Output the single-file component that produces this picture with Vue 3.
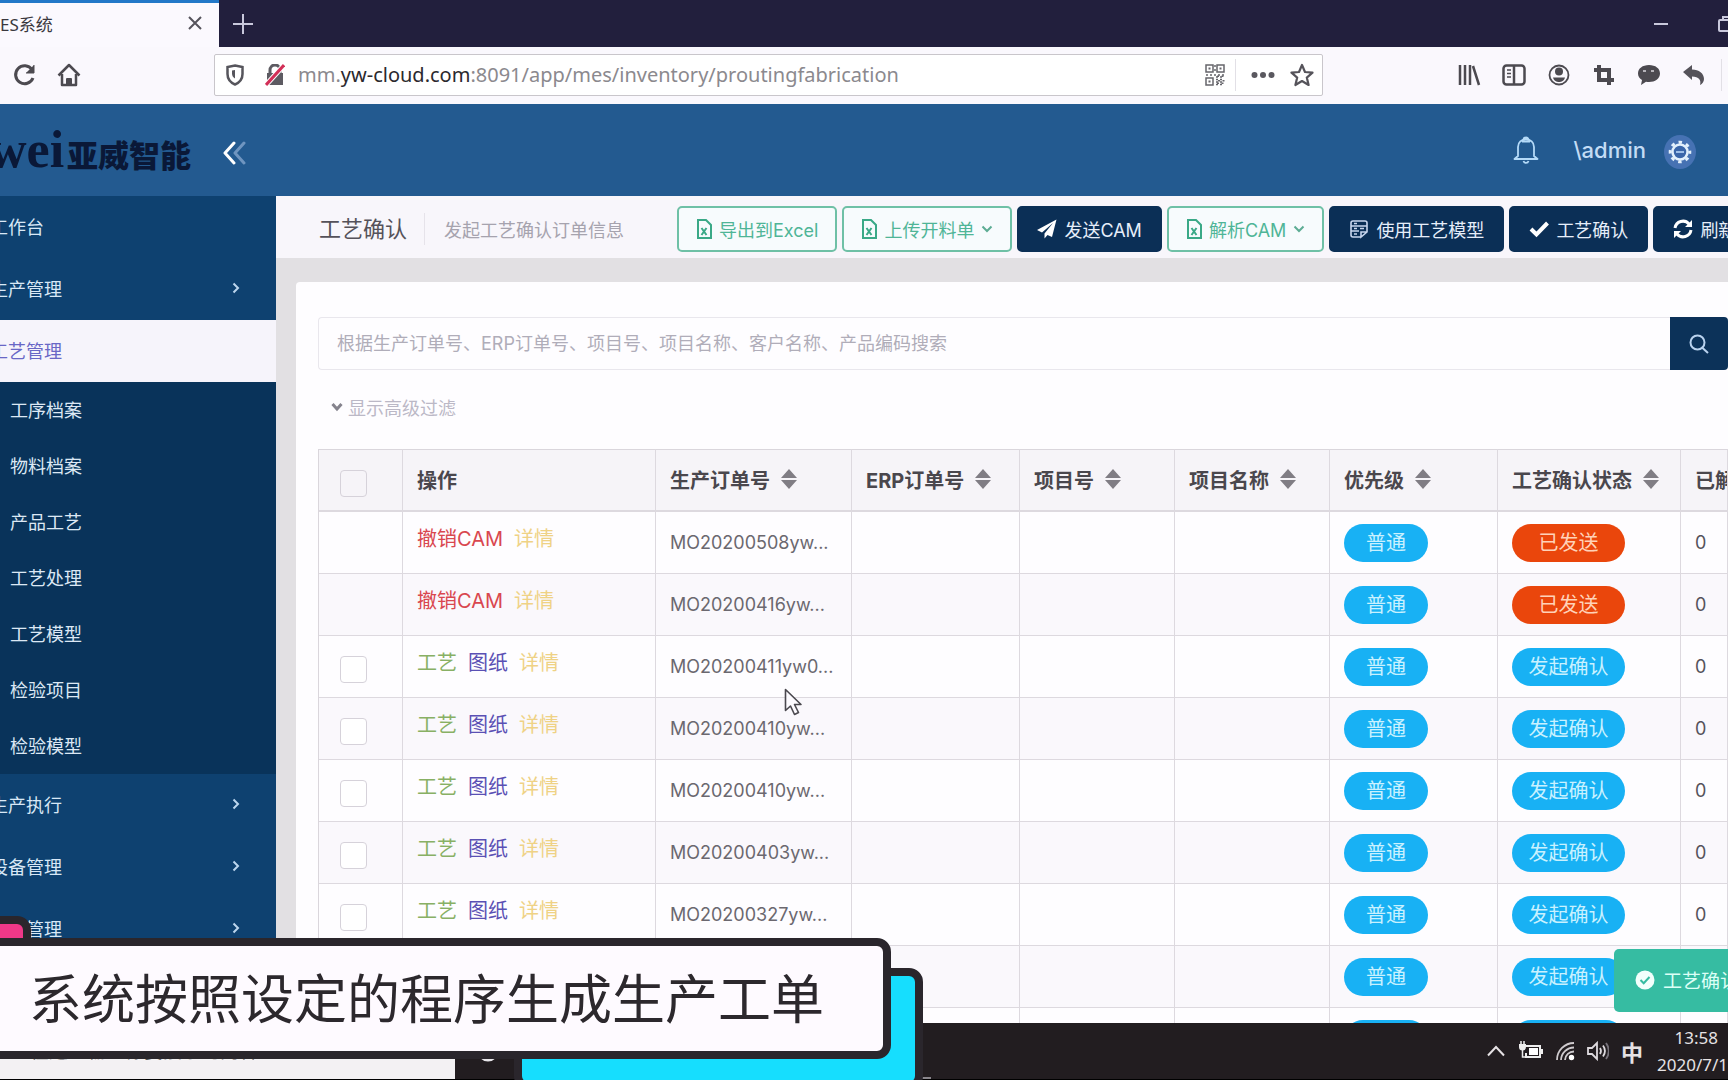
<script setup>
import { ref } from 'vue'

const keyword = ref('')

const subMenu = ['工序档案', '物料档案', '产品工艺', '工艺处理', '工艺模型', '检验项目', '检验模型']

const columns = [
  { label: '生产订单号', sort: true },
  { label: 'ERP订单号', sort: true },
  { label: '项目号', sort: true },
  { label: '项目名称', sort: true },
  { label: '优先级', sort: true },
  { label: '工艺确认状态', sort: true },
  { label: '已解', sort: false }
]

const sentOps = [
  { text: '撤销CAM', tone: 'red' },
  { text: '详情', tone: 'yellow' }
]
const openOps = [
  { text: '工艺', tone: 'green' },
  { text: '图纸', tone: 'indigo' },
  { text: '详情', tone: 'yellow' }
]

const rows = [
  { order: 'MO20200508yw...', sent: true },
  { order: 'MO20200416yw...', sent: true },
  { order: 'MO20200411yw0...', sent: false },
  { order: 'MO20200410yw...', sent: false },
  { order: 'MO20200410yw...', sent: false },
  { order: 'MO20200403yw...', sent: false },
  { order: 'MO20200327yw...', sent: false },
  { order: '', sent: false },
  { order: '', sent: false }
]
</script>

<template>
  <div class="screen">
    <header class="tabs">
      <div class="tab">
        <span>ES系统</span>
        <button class="bare" aria-label="关闭标签页">
          <svg width="16" height="16" viewBox="0 0 16 16" fill="none" stroke="#55535c" stroke-width="2"><path d="M2 2l12 12M14 2L2 14" /></svg>
        </button>
      </div>
      <button class="bare plus" aria-label="新建标签页">
        <svg width="20" height="20" viewBox="0 0 20 20" fill="none" stroke="#c9c8dc" stroke-width="2"><path d="M10 0v20M0 10h20" /></svg>
      </button>
      <div class="wincontrols">
        <button class="bare" aria-label="最小化">
          <svg width="16" height="16" viewBox="0 0 16 16" stroke="#c9c8dc" stroke-width="2"><path d="M1 8h14" /></svg>
        </button>
        <button class="bare" aria-label="还原">
          <svg width="18" height="18" viewBox="0 0 18 18" fill="none" stroke="#c9c8dc" stroke-width="2"><rect x="2" y="5" width="11" height="11" rx="1" /><path d="M6 5V2h11v11h-4" /></svg>
        </button>
      </div>
    </header>

    <nav class="toolbar">
      <div class="navbtns">
        <button class="bare" aria-label="刷新">
          <svg width="24" height="24" viewBox="0 0 24 24" fill="none" stroke="#4c4a50" stroke-width="3"><path d="M19 6.500A9 9 0 1 0 20 15" /><path d="M21 2v8h-8" fill="#4c4a50" stroke-width="1" /></svg>
        </button>
        <button class="bare" aria-label="主页">
          <svg width="24" height="24" viewBox="0 0 24 24" fill="none" stroke="#4c4a50" stroke-width="2.500" stroke-linejoin="round"><path d="M1.500 12.500L12 2l10.500 10.500M5 11v11h14V11" /><path d="M10 22v-6h4v6z" fill="#4c4a50" stroke-width="2" /></svg>
        </button>
      </div>
      <div class="urlbox">
        <svg width="18" height="22" viewBox="0 0 18 22" fill="none" stroke="#56555c" stroke-width="2.500"><path d="M9 1.500L16.500 3v7c0 5-3 8.500-7.500 10.500C4.500 18.500 1.500 15 1.500 10V3z" /><path d="M9 6v8.500c-2-1-3-3-3-5V6.500z" fill="#56555c" stroke="none" /></svg>
        <svg width="20" height="22" viewBox="0 0 20 22" fill="none"><rect x="2" y="9" width="16" height="12" fill="#5d5b62" /><path d="M5 10V6a5 5 0 0 1 10 0v4" stroke="#5d5b62" stroke-width="3" /><path d="M1 21L19 1" stroke="#fff" stroke-width="5" /><path d="M1 21L19 1" stroke="#d22f57" stroke-width="3" /></svg>
        <span class="url">mm.<b>yw-cloud.com</b>:8091/app/mes/inventory/proutingfabrication</span>
        <svg width="20" height="22" viewBox="0 0 20 22" fill="none" stroke="#66656b" stroke-width="1.500"><rect x="1" y="1" width="7" height="7" /><rect x="12" y="1" width="7" height="7" /><rect x="1" y="14" width="7" height="7" /><path d="M3.500 4.500h2M14.500 4.500h2M3.500 17.500h2" stroke-width="2" /><path d="M10 1v8M1 11h18M11 13h8M11 15.500h8M11 18h8M11 20.500h8" stroke-dasharray="2 2" /><path d="M12 12.200h8M13 16.700h7M12 19.200h7" stroke-dasharray="2 2.500" /></svg>
        <i class="sep"></i>
        <svg width="24" height="8" viewBox="0 0 24 8" fill="#5a585f"><circle cx="3.500" cy="4" r="3" /><circle cx="12" cy="4" r="3" /><circle cx="20.500" cy="4" r="3" /></svg>
        <svg width="24" height="24" viewBox="0 0 24 24" fill="none" stroke="#55535a" stroke-width="2.200" stroke-linejoin="round"><path d="M12 2l3 7 7.500.6-5.700 5 1.800 7.400L12 18l-6.600 4 1.800-7.400-5.700-5L9 9z" /></svg>
      </div>
      <div class="tools">
        <svg width="24" height="24" viewBox="0 0 24 24" stroke="#4c4a50" stroke-width="2.500"><path d="M3 2v20M8 2v20M13 2v20M16 3l6 19" /></svg>
        <svg width="24" height="24" viewBox="0 0 24 24" fill="none" stroke="#4c4a50" stroke-width="2.500"><rect x="1.500" y="2.500" width="21" height="19" rx="3" /><path d="M12 3v18" /><path d="M5 7h4M5 10.500h4M5 14h4" stroke-width="1.500" /></svg>
        <svg width="24" height="24" viewBox="0 0 24 24"><circle cx="12" cy="12" r="9.500" fill="none" stroke="#4c4a50" stroke-width="1.800" /><circle cx="12" cy="8.500" r="4" fill="#4c4a50" /><path d="M6 14.500h12c-1 3.500-3.500 4.500-6 4.500s-5-1-6-4.500z" fill="#4c4a50" /></svg>
        <svg width="24" height="24" viewBox="0 0 24 24" fill="none" stroke="#4c4a50" stroke-width="4"><path d="M7 2v15h15M2 7h15v15" /></svg>
        <svg width="24" height="24" viewBox="0 0 24 24"><path d="M12 2c6.500 0 11 3.500 11 8.500S18 19 12 19c-1 0-2 0-3-.3L4 22l1-5c-2.500-1.500-4-3.800-4-6.500C1 5.500 5.500 2 12 2z" fill="#4c4a50" /><path d="M6 8h3M14 8h3" stroke="#d8d6dc" stroke-width="1.500" /></svg>
        <svg width="24" height="24" viewBox="0 0 24 24"><path d="M1 9l9-7v4.500c7 0 12 4 12 9.500 0 2.500-1.500 5-4 6 1.500-5-1-8-8-8.500V17z" fill="#55535a" /></svg>
        <i class="sep"></i>
      </div>
    </nav>

    <div class="appbar">
      <div class="brand"><span class="mark">wei</span><span class="name">亚威智能</span></div>
      <button class="bare collapse" aria-label="收起菜单">
        <svg width="24" height="24" viewBox="0 0 24 24" fill="none" stroke-width="3" stroke-linecap="round" stroke-linejoin="round"><path d="M12 2L3 12l9 10" stroke="#fff" /><path d="M22 2l-9 10 9 10" stroke="#6f95c0" /></svg>
      </button>
      <div class="user">
        <svg width="26" height="28" viewBox="0 0 26 28" fill="none" stroke="#b4daf8" stroke-width="1.800" stroke-linejoin="round"><path d="M10.500 4a2.500 2.500 0 0 1 5 0M5 20V11c0-5 3.500-7.500 8-7.500s8 2.500 8 7.500v9l3.500 3H1.500z" /><path d="M10.500 25a2.600 2.600 0 0 0 5 0M9 5.500h8" /></svg>
        <span class="who">\admin</span>
        <svg class="gear" width="32" height="34" viewBox="0 0 32 34"><ellipse cx="16" cy="17" rx="16" ry="17" fill="#4672b3" /><circle cx="16" cy="17" r="7.500" fill="#3a66aa" stroke="#e2f0fc" stroke-width="2.500" /><circle cx="16" cy="17" r="9.800" fill="none" stroke="#e2f0fc" stroke-width="3" stroke-dasharray="3.500 4.197" stroke-dashoffset="1.750" /><path d="M12 17h8" stroke="#9dbfe8" stroke-width="2" /></svg>
      </div>
    </div>

    <div class="body">
      <aside class="side">
        <a href="#" class="item">工作台</a>
        <a href="#" class="item">生产管理<svg class="arrow" width="8" height="12" viewBox="0 0 8 12"><path d="M1.500 1.500L6 6l-4.500 4.500" /></svg></a>
        <a href="#" class="item active">工艺管理</a>
        <div class="sub">
          <a v-for="s in subMenu" :key="s" href="#">{{ s }}</a>
        </div>
        <a href="#" class="item">生产执行<svg class="arrow" width="8" height="12" viewBox="0 0 8 12"><path d="M1.500 1.500L6 6l-4.500 4.500" /></svg></a>
        <a href="#" class="item">设备管理<svg class="arrow" width="8" height="12" viewBox="0 0 8 12"><path d="M1.500 1.500L6 6l-4.500 4.500" /></svg></a>
        <a href="#" class="item tail">管理<svg class="arrow" width="8" height="12" viewBox="0 0 8 12"><path d="M1.500 1.500L6 6l-4.500 4.500" /></svg></a>
      </aside>

      <main class="main">
        <div class="pagehead">
          <h1>工艺确认</h1>
          <p>发起工艺确认订单信息</p>
          <div class="actions">
            <button class="btn line">
              <svg width="16" height="20" viewBox="0 0 16 20" class="file"><path d="M2 1h8l5 5v13H2z" /><path d="M5.500 9l5 7M10.500 9l-5 7" /></svg>导出到Excel
            </button>
            <button class="btn line">
              <svg width="16" height="20" viewBox="0 0 16 20" class="file"><path d="M2 1h8l5 5v13H2z" /><path d="M5.500 9l5 7M10.500 9l-5 7" /></svg>上传开料单
              <svg width="12" height="8" viewBox="0 0 12 8" class="caret"><path d="M1.500 1.500L6 6l4.500-4.500" /></svg>
            </button>
            <button class="btn solid">
              <svg width="20" height="20" viewBox="0 0 20 20" fill="#fff"><path d="M19.500.5L0 11l5 2.500L16 4 7.500 14.500V19.500L10.500 16l4.500 2z" /></svg>发送CAM
            </button>
            <button class="btn line">
              <svg width="16" height="20" viewBox="0 0 16 20" class="file"><path d="M2 1h8l5 5v13H2z" /><path d="M5.500 9l5 7M10.500 9l-5 7" /></svg>解析CAM
              <svg width="12" height="8" viewBox="0 0 12 8" class="caret"><path d="M1.500 1.500L6 6l4.500-4.500" /></svg>
            </button>
            <button class="btn solid">
              <svg width="20" height="20" viewBox="0 0 20 20" fill="none" stroke="#c8d6ee" stroke-width="1.600"><path d="M12 18H4a2 2 0 0 1-2-2V4a2 2 0 0 1 2-2h12a2 2 0 0 1 2 2v9l-6 5v-5h6" /><path d="M2 7h16M2 12h8M5 4.500h3M5 9.500h3M11 9.500h4M5 15h3" /></svg>使用工艺模型
            </button>
            <button class="btn solid">
              <svg width="20" height="20" viewBox="0 0 20 20" fill="none" stroke="#fff" stroke-width="4"><path d="M2 10l5.500 5.500L18.500 4" /></svg>工艺确认
            </button>
            <button class="btn solid">
              <svg width="20" height="20" viewBox="0 0 20 20" fill="none" stroke="#fff" stroke-width="3"><path d="M2 9a8 8 0 0 1 14-4M18 11a8 8 0 0 1-14 4" /><path d="M19 1v7h-7zM1 19v-7h7z" fill="#fff" stroke="none" /></svg>刷新
            </button>
          </div>
        </div>

        <section class="card">
          <form class="search" @submit.prevent>
            <input v-model="keyword" type="text" aria-label="搜索" placeholder="根据生产订单号、ERP订单号、项目号、项目名称、客户名称、产品编码搜索" />
            <button aria-label="搜索">
              <svg width="20" height="20" viewBox="0 0 20 20" fill="none" stroke="#b9d2ee" stroke-width="2"><circle cx="8.500" cy="8.500" r="7" /><path d="M12.500 13l6.500 6" /></svg>
            </button>
          </form>
          <a href="#" class="filter">
            <svg width="12" height="10" viewBox="0 0 12 10" fill="none" stroke="#85838d" stroke-width="3"><path d="M1.500 2L6 7l4.500-5" /></svg>显示高级过滤
          </a>

          <table>
            <colgroup>
              <col class="c-check" /><col class="c-ops" /><col class="c-order" /><col class="c-erp" />
              <col class="c-proj" /><col class="c-proj" /><col class="c-prio" /><col class="c-state" /><col />
            </colgroup>
            <thead>
              <tr>
                <th class="check"><input type="checkbox" aria-label="全选" /></th>
                <th>操作</th>
                <th v-for="c in columns" :key="c.label">
                  <span class="th">
                    {{ c.label }}
                    <svg v-if="c.sort" width="16" height="20" viewBox="0 0 16 20" fill="#807d84"><path d="M8 0l8 9H0zM8 20l8-9H0z" /></svg>
                  </span>
                </th>
              </tr>
            </thead>
            <tbody>
              <tr v-for="(r, i) in rows" :key="i">
                <td class="check"><input v-if="!r.sent" type="checkbox" :aria-label="'选择 ' + r.order" /></td>
                <td class="ops">
                  <template v-if="r.order">
                    <a v-for="o in (r.sent ? sentOps : openOps)" :key="o.text" href="#" :class="o.tone">{{ o.text }}</a>
                  </template>
                </td>
                <td class="order">{{ r.order }}</td>
                <td></td>
                <td></td>
                <td></td>
                <td><span class="badge">普通</span></td>
                <td><span class="badge wide" :class="{ sent: r.sent }">{{ r.sent ? '已发送' : '发起确认' }}</span></td>
                <td class="num">0</td>
              </tr>
            </tbody>
          </table>
        </section>
      </main>

      <div class="toast" role="status">
        <svg width="20" height="20" viewBox="0 0 20 20"><circle cx="10" cy="10" r="9.500" fill="#f2fffc" /><path d="M5.500 10l3.200 3.200L14.500 7" fill="none" stroke="#36bca2" stroke-width="2" /></svg>工艺确认
      </div>
    </div>

    <footer class="taskbar">
      <input type="text" aria-label="任务栏搜索" placeholder="在这里输入你要搜索的内容" />
      <svg class="ring" width="22" height="22" viewBox="0 0 22 22" fill="none" stroke="#e8e6ea" stroke-width="3"><circle cx="11" cy="11" r="9" /></svg>
      <i class="running"></i>
      <div class="tray">
        <svg width="18" height="12" viewBox="0 0 18 12" fill="none" stroke="#e6e2e4" stroke-width="2"><path d="M1 10.500L9 2l8 8.500" /></svg>
        <svg width="24" height="20" viewBox="0 0 24 20"><path d="M7 5h14v11H7v-4" fill="none" stroke="#eee" stroke-width="2" /><rect x="10" y="7" width="9" height="7" fill="#fff" /><rect x="22" y="8" width="2" height="5" fill="#eee" /><path d="M2 0v3M5 0v3" stroke="#eee" stroke-width="1.500" /><path d="M0 3h7v3a3.500 3.500 0 0 1-7 0z" fill="#eee" /><path d="M3.500 9v7H7" fill="none" stroke="#eee" stroke-width="1.500" /></svg>
        <svg width="20" height="20" viewBox="0 0 20 20" fill="none" stroke="#cfcbce" stroke-width="1.800"><path d="M2 19A17 17 0 0 1 19 2M6 19A13 13 0 0 1 19 6.500M10 19a9 9 0 0 1 9-8.500" /><circle cx="16.500" cy="16.500" r="1.800" fill="#fff" stroke="#fff" /></svg>
        <svg width="22" height="20" viewBox="0 0 22 20" fill="none" stroke="#dedade" stroke-width="1.800"><path d="M1 7h4l5-5v16l-5-5H1z" /><path d="M13 7c1.300 2 1.300 4 0 6M16 4.500c2.500 3.500 2.500 7.500 0 11" /><path d="M19 2c3.500 5 3.500 11 0 16" stroke="#77727a" /></svg>
        <span class="ime">中</span>
        <div class="clock"><span class="time">13:58</span><span>2020/7/1</span></div>
      </div>
    </footer>

    <svg class="cursor" width="18" height="28" viewBox="0 0 18 28"><path d="M1.500 1.500v21l5-4.500 4 8.500 4-2-4-8h6.500z" fill="#fdfbff" stroke="#4a484e" stroke-width="1.600" stroke-linejoin="round" /></svg>
    <div class="chip pink"></div>
    <div class="chip cyan"></div>
    <div class="caption">系统按照设定的程序生成生产工单</div>
  </div>
</template>

<style>
body {
  margin: 0;
}
</style>

<style scoped>
.screen {
  position: relative;
  display: flex;
  flex-direction: column;
  height: 100vh;
  overflow: hidden;
  font-family: Inter, "Noto Sans CJK SC", sans-serif;
  font-size: 18px;
  color: #55525a;
  background: #e2e0e3;
}
.screen * {
  box-sizing: border-box;
}
svg {
  display: block;
  flex: none;
}
a {
  text-decoration: none;
  color: inherit;
}
button,
input {
  font: inherit;
  margin: 0;
}
.bare {
  border: 0;
  padding: 0;
  background: none;
}
.sep {
  width: 1px;
  height: 32px;
  background: #e2e0e6;
}

/* browser chrome */
.tabs {
  display: flex;
  flex: none;
  align-items: center;
  height: 47px;
  background: #221f3d;
}
.tab {
  display: flex;
  align-items: center;
  justify-content: space-between;
  width: 219px;
  height: 47px;
  padding: 0 16px 4px 0;
  border-top: 3px solid #2278c8;
  background: #fbf9fe;
  color: #3a383e;
  font-family: "Noto Sans", "Noto Sans CJK SC", sans-serif;
  font-size: 17px;
}
.plus {
  margin-left: 14px;
}
.wincontrols {
  display: flex;
  align-items: center;
  gap: 48px;
  margin-left: auto;
  margin-right: -7px;
}
.toolbar {
  display: flex;
  flex: none;
  align-items: center;
  height: 57px;
  padding-bottom: 2px;
  background: #faf8fd;
}
.navbtns {
  display: flex;
  gap: 20px;
  width: 214px;
  padding-left: 13px;
}
.urlbox {
  display: flex;
  flex: 1;
  align-items: center;
  gap: 15px;
  height: 42px;
  padding: 0 8px 0 11px;
  border: 1px solid #c9c6cb;
  border-radius: 2px;
  background: #fff;
}
.urlbox svg:nth-child(2) {
  margin-left: 6px;
}
.url {
  flex: 1;
  font-family: "Noto Sans", sans-serif;
  font-size: 20px;
  color: #8b898e;
  margin-left: -2px;
}
.url b {
  font-weight: 400;
  color: #2b292e;
}
.urlbox .sep {
  margin-left: -5px;
}
.tools {
  display: flex;
  align-items: center;
  gap: 21px;
  width: 405px;
  padding-left: 134px;
}
.tools .sep {
  margin-left: -6px;
}

/* application bar */
.appbar {
  display: flex;
  flex: none;
  align-items: center;
  height: 92px;
  background: #235a90;
}
.brand {
  display: flex;
  align-items: baseline;
  width: 202px;
  margin-left: -11px;
  padding-top: 6px;
  line-height: 60px;
  color: #0a1837;
}
.mark {
  width: 81px;
  font-family: "Liberation Serif", serif;
  font-weight: 700;
  font-size: 52px;
}
.name {
  font-size: 31px;
  font-weight: 900;
  white-space: nowrap;
}
.collapse {
  margin: 6px 0 0 31px;
}
.user {
  display: flex;
  align-items: center;
  margin-left: auto;
  margin-right: 32px;
}
.who {
  margin: 0 18px 0 34px;
  font-size: 22px;
  font-weight: 500;
  color: #c3dcf5;
}
.gear {
  margin-top: 4px;
}

/* side menu */
.body {
  position: relative;
  display: flex;
  flex: 1;
  min-height: 0;
  overflow: hidden;
}
.side {
  flex: none;
  width: 276px;
  overflow: hidden;
  background: #0e4170;
  color: #d9e8f6;
}
.item {
  display: flex;
  align-items: center;
  height: 62px;
  margin-left: -10px;
  padding: 0 36px 2px 0;
}
.item.active {
  background: #f6f4fb;
  color: #6967c6;
}
.item.tail {
  text-indent: 36px;
}
.arrow {
  margin-left: auto;
  fill: none;
  stroke: #bcd6ee;
  stroke-width: 2;
}
.sub {
  background: #09335a;
  color: #dce8f4;
}
.sub a {
  display: flex;
  align-items: center;
  height: 56px;
  padding: 0 0 2px 10px;
}

/* page */
.main {
  flex: 1;
  min-width: 0;
  overflow: hidden;
}
.pagehead {
  display: flex;
  align-items: center;
  height: 62px;
  padding: 4px 0 0 43px;
  background: #f8f6fb;
  white-space: nowrap;
}
h1 {
  margin: 0;
  padding-right: 17px;
  border-right: 1px solid #e6e3ea;
  font-size: 22px;
  line-height: 32px;
  font-weight: 400;
  color: #55525a;
}
.pagehead p {
  margin: 0 0 0 19px;
  color: #a6a3ae;
}
.actions {
  display: flex;
  flex: none;
  gap: 5px;
  margin-left: 53px;
}
.btn {
  display: flex;
  flex: none;
  align-items: center;
  gap: 7px;
  height: 46px;
  padding: 0 17px;
  border: 2px solid;
  border-radius: 5px;
  white-space: nowrap;
}
.line {
  border-color: #6fc0a6;
  background: #f7fbfd;
  color: #4fb597;
}
.solid {
  padding: 0 18px;
  border-color: #0b2f56;
  background: #0b2f56;
  color: #e6eefa;
}
.file {
  fill: none;
  stroke: #3aa987;
  stroke-width: 2;
}
.caret {
  fill: none;
  stroke: #5dac94;
  stroke-width: 2;
}
.card {
  margin: 24px 0 0 20px;
  padding: 35px 0 0 22px;
  border-radius: 4px 0 0 0;
  background: #fefdff;
}
.search {
  display: flex;
}
.search input {
  flex: 1;
  height: 53px;
  padding: 0 18px;
  border: 1px solid #e9e7ed;
  border-right: 0;
  border-radius: 4px 0 0 4px;
  background: #fefdff;
  color: #55525a;
}
.search input::placeholder {
  color: #b0adb9;
  opacity: 1;
}
.search button {
  display: grid;
  place-items: center;
  width: 58px;
  border: 0;
  border-radius: 0 4px 4px 0;
  background: #0c3259;
}
.filter {
  display: flex;
  align-items: center;
  gap: 5px;
  height: 73px;
  margin-bottom: 6px;
  padding-left: 13px;
  color: #bbb8c6;
}

table {
  width: 100%;
  table-layout: fixed;
  border-collapse: separate;
  border-spacing: 0;
  border-left: 1px solid #dad6dc;
  font-size: 20px;
}
.c-check { width: 84px; }
.c-ops { width: 253px; }
.c-order { width: 196px; }
.c-erp { width: 168px; }
.c-proj { width: 155px; }
.c-prio { width: 168px; }
.c-state { width: 183px; }
th,
td {
  height: 62px;
  padding: 0 0 0 14px;
  border-right: 1px solid #ddd9df;
  border-bottom: 1px solid #ddd9df;
  text-align: left;
  white-space: nowrap;
  overflow: hidden;
}
th {
  height: 63px;
  padding-bottom: 2px;
  border-top: 1px solid #dad6dc;
  border-bottom-width: 2px;
  background: #f6f4f8;
  font-weight: 700;
  color: #4a474d;
}
.th {
  display: flex;
  align-items: center;
  gap: 11px;
}
tbody tr:nth-child(even) {
  background: #faf8fc;
}
.check {
  padding: 6px 0 0 21px;
}
.check input {
  appearance: none;
  display: block;
  width: 27px;
  height: 27px;
  border: 1px solid #d6d2da;
  border-radius: 4px;
  background: #fff;
}
th.check input {
  background: transparent;
}
.ops {
  padding-bottom: 10px;
}
.ops a {
  margin-right: 11px;
}
.red { color: #d9474f; }
.yellow { color: #efd285; }
.green { color: #88b064; }
.indigo { color: #5a50b4; }
.order {
  font-size: 18px;
  color: #6b686f;
}
.num {
  font-size: 18px;
}
.badge {
  display: block;
  width: 84px;
  height: 38px;
  border-radius: 19px;
  background: #18b1f4;
  color: #c9f1ff;
  line-height: 38px;
  text-align: center;
}
.badge.wide {
  width: 113px;
}
.badge.sent {
  background: #ea460c;
  color: #ffd2b8;
}
.toast {
  position: absolute;
  right: 0;
  bottom: 11px;
  display: flex;
  align-items: center;
  gap: 8px;
  width: 114px;
  height: 63px;
  padding: 0 0 2px 21px;
  overflow: hidden;
  border-radius: 5px 0 0 5px;
  background: #36bca2;
  color: #dcfff6;
  font-size: 19px;
  white-space: nowrap;
}

/* desktop task bar */
.taskbar {
  display: flex;
  flex: none;
  align-items: center;
  height: 57px;
  border-bottom: 1px solid #000;
  background: #221d20;
  color: #e6e2e4;
}
.taskbar input {
  width: 455px;
  height: 56px;
  padding: 0 0 0 30px;
  border: 0;
  background: #f3f1f3;
  font-size: 19px;
}
.taskbar input::placeholder {
  color: #555;
  opacity: 1;
}
.ring {
  margin-left: 22px;
}
.running {
  align-self: flex-end;
  width: 9px;
  height: 2px;
  margin-left: 423px;
  background: #8a868c;
}
.tray {
  display: flex;
  align-items: center;
  gap: 12px;
  margin-left: auto;
}
.tray svg:first-child {
  margin-right: 2px;
}
.ime {
  font-size: 22px;
  font-weight: 700;
}
.clock {
  display: flex;
  flex-direction: column;
  width: 73px;
  font-family: "Noto Sans", sans-serif;
  font-size: 17px;
  line-height: 27px;
  text-align: right;
}
.time {
  padding-right: 10px;
}

/* overlays */
.cursor {
  position: absolute;
  left: 784px;
  top: 688px;
}
.chip {
  position: absolute;
  border: 8px solid #2a262c;
}
.pink {
  left: -40px;
  top: 916px;
  width: 71px;
  height: 60px;
  border-radius: 14px;
  background: #f03888;
}
.cyan {
  left: 514px;
  top: 968px;
  width: 409px;
  height: 122px;
  border-radius: 14px;
  background: #16defe;
}
.caption {
  position: absolute;
  left: -20px;
  top: 938px;
  width: 911px;
  height: 121px;
  padding: 2px 0 0 41px;
  border: 8px solid #2a262c;
  border-radius: 14px;
  background: #fefaff;
  color: #2c282d;
  font-size: 53px;
  line-height: 105px;
  white-space: nowrap;
}
</style>
